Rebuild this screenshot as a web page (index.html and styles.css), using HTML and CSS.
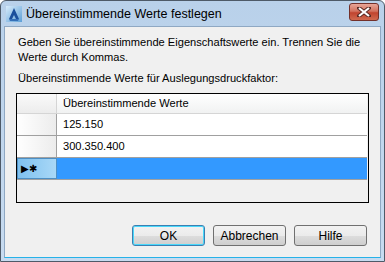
FILE: index.html
```html
<!DOCTYPE html>
<html lang="de">
<head>
    <meta charset="UTF-8">
    <title>Übereinstimmende Werte festlegen</title>
    <link rel="stylesheet" href="styles.css">
</head>
<body>
<div class="window">
    <div class="titlebar">
        <svg class="app-icon" width="16" height="16" viewBox="0 0 16 16">
            <defs>
                <linearGradient id="ig" x1="0" y1="0" x2="1" y2="1">
                    <stop offset="0" stop-color="#d8ecfb"/>
                    <stop offset="1" stop-color="#5d9fd6"/>
                </linearGradient>
            </defs>
            <rect x="0" y="0" width="16" height="16" fill="url(#ig)"/>
            <polygon points="8,2 13,13 10,13 8,9 6,13 3,13" fill="#1a4f9c"/>
            <polygon points="3,13 13,13 12,15 4,15" fill="#3570b8"/>
        </svg>
        <span class="title">Übereinstimmende Werte festlegen</span>
        <button class="close-btn">
            <svg width="14" height="10" viewBox="0 0 14 10">
                <path d="M2 1 L12 9 M12 1 L2 9" stroke="#5a2a24" stroke-width="4" stroke-linecap="square"/>
                <path d="M2 1 L12 9 M12 1 L2 9" stroke="#fff" stroke-width="2.2"/>
            </svg>
        </button>
    </div>
    <div class="client">
        <p class="intro">Geben Sie übereinstimmende Eigenschaftswerte ein. Trennen Sie die Werte durch Kommas.</p>
        <p class="label">Übereinstimmende Werte für Auslegungsdruckfaktor:</p>

        <div class="grid">
            <div class="row head">
                <div class="rowhead"></div>
                <div class="cell">Übereinstimmende Werte</div>
            </div>
            <div class="row">
                <div class="rowhead"></div>
                <div class="cell">125.150</div>
            </div>
            <div class="row">
                <div class="rowhead"></div>
                <div class="cell">300.350.400</div>
            </div>
            <div class="row new">
                <div class="rowhead">&#9654;&#10033;</div>
                <div class="cell"></div>
            </div>
        </div>

        <div class="buttons">
            <button class="btn default">OK</button>
            <button class="btn">Abbrechen</button>
            <button class="btn">Hilfe</button>
        </div>
    </div>
</div>
</body>
</html>
```

FILE: styles.css
```css
body {
    margin: 0;
    font-family: "Liberation Sans", Arial, sans-serif;
}

.window {
    width: 385px;
    height: 262px;
    box-sizing: border-box;
    border: 1px solid #4e5a68;
    border-radius: 6px 6px 0 0;
    background: linear-gradient(#b9d1ea, #c7dbf0);
    display: flex;
    flex-direction: column;
}

.titlebar {
    height: 25px;
    display: flex;
    align-items: center;
    padding: 0 5px 0 5px;
}

.app-icon {
    margin-right: 4px;
}

.title {
    flex: 1;
    font-size: 12.5px;
    color: #000;
}

.close-btn {
    width: 30px;
    height: 18px;
    margin-top: -3px;
    padding: 0;
    border: 1px solid #73302a;
    border-radius: 3px;
    background: linear-gradient(#e8a597, #d2725f 45%, #c1442f 55%, #d06a4f);
    display: flex;
    align-items: center;
    justify-content: center;
}

.client {
    flex: 1;
    margin: 0 3px 3px 3px;
    border: 1px solid #8fa8c3;
    border-bottom-color: #26b2e8;
    background: #f0f0f0;
    padding: 8px 11px 0 11px;
    font-size: 11.1px;
    color: #000;
}

.intro {
    margin: 0 0 0 2px;
    line-height: 15px;
}

.label {
    margin: 6px 0 0 2px;
    line-height: 15px;
}

.grid {
    margin-top: 7px;
    height: 110px;
    box-sizing: border-box;
    border: 1px solid #000;
    background: #f0f0f0;
}

.row {
    display: flex;
    height: 22px;
    box-sizing: border-box;
    border-bottom: 1px solid #a0a0a0;
    margin-right: 1px;
}

.row.head {
    height: 20px;
    background: linear-gradient(#ffffff, #f1f2f2);
    border-bottom-color: #d5d5d5;
}

.rowhead {
    width: 40px;
    flex: none;
    box-sizing: border-box;
    border-right: 1px solid #a0a0a0;
    background: linear-gradient(90deg, #ffffff, #ececec);
    font-size: 10px;
    line-height: 20px;
    padding-left: 3px;
}

.head .rowhead {
    background: linear-gradient(#fafafa, #ececec);
    border-right-color: #d5d5d5;
}

.cell {
    flex: 1;
    background: #fff;
    padding-left: 6px;
    line-height: 21px;
}

.head .cell {
    background: transparent;
    line-height: 19px;
}

.new .rowhead {
    background: linear-gradient(90deg, #7fc1ef, #a9d8f7);
    border: 1px solid #4d8fc4;
}

.new .cell {
    background: #3399ff;
}

.buttons {
    display: flex;
    justify-content: flex-end;
    gap: 8px;
    margin-top: 22px;
    padding-right: 2px;
}

.btn {
    width: 73px;
    height: 21px;
    padding: 0;
    font-family: "Liberation Sans", Arial, sans-serif;
    font-size: 12px;
    color: #000;
    border: 1px solid #707070;
    border-radius: 3px;
    background: linear-gradient(#f2f2f2, #ebebeb 50%, #dddddd 51%, #cfcfcf);
}

.btn.default {
    border-color: #3c7fb1;
    box-shadow: inset 0 0 0 1px #48d8fb;
}
```
